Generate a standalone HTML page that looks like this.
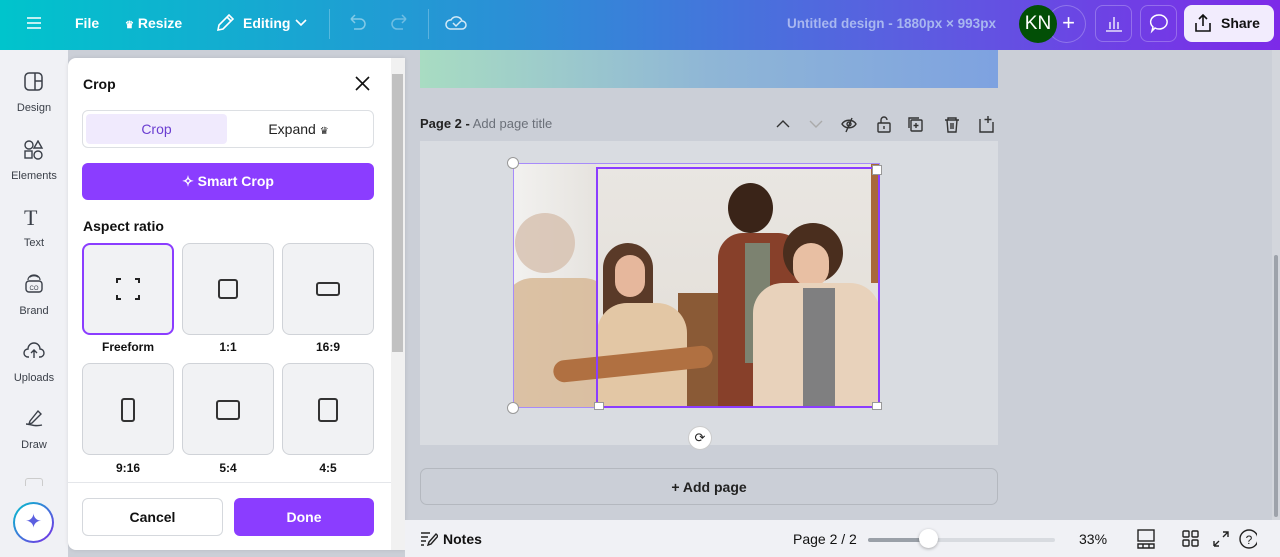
<!DOCTYPE html>
<html><head><meta charset="utf-8"><style>
*{box-sizing:border-box;margin:0;padding:0}
body{width:1280px;height:557px;overflow:hidden;font-family:"Liberation Sans",sans-serif;background:#cbcfd7;position:relative}
.abs{position:absolute}
.top{left:0;top:0;width:1280px;height:50px;background:linear-gradient(90deg,#00c4cc 0%,#2b8fd6 40%,#5a5fe0 70%,#7d2ae8 100%)}
.tw{color:#fff;font-weight:bold;font-size:14px}
.side{left:0;top:50px;width:68px;height:507px;background:#f0f1f5}
.si{width:68px;text-align:center;font-size:11px;color:#3a3f48}
.panel{left:68px;top:58px;width:337px;height:492px;background:#fff;border-radius:8px 0 0 8px;box-shadow:0 0 4px rgba(0,0,0,.1)}
.box{background:#f1f2f4;border:1px solid #d0d3d8;border-radius:8px;width:92px;height:92px}
.lbl{font-size:12px;font-weight:bold;color:#111;text-align:center;width:92px}
.bot{left:405px;top:520px;width:875px;height:37px;background:#f0f1f5}
</style></head><body>
<div class="abs top"></div>
<svg class="abs" style="left:27px;top:16px" width="14" height="14"><path d="M0 2h14M0 7h14M0 12h14" stroke="#fff" stroke-width="1.6"/></svg>
<div class="abs tw" style="left:75px;top:15px">File</div>
<div class="abs tw" style="left:125px;top:15px"><span style="font-size:10px">♛</span> Resize</div>
<svg class="abs" style="left:215px;top:13px" width="20" height="20"><path d="M3 17l1-5L14 2l4 4L8 16z M12 4l4 4" fill="none" stroke="#fff" stroke-width="1.6"/></svg>
<div class="abs tw" style="left:243px;top:15px">Editing</div>
<svg class="abs" style="left:295px;top:19px" width="12" height="8"><path d="M1 1l5 5 5-5" fill="none" stroke="#fff" stroke-width="1.6"/></svg>
<div class="abs" style="left:329px;top:9px;width:1px;height:30px;background:rgba(255,255,255,.25)"></div>
<svg class="abs" style="left:347px;top:14px" width="20" height="18"><path d="M4 5h9a5 5 0 010 10H7M4 5l4-4M4 5l4 4" fill="none" stroke="rgba(255,255,255,.45)" stroke-width="1.5"/></svg>
<svg class="abs" style="left:390px;top:14px" width="20" height="18"><path d="M16 5H7a5 5 0 000 10h6M16 5l-4-4M16 5l-4 4" fill="none" stroke="rgba(255,255,255,.35)" stroke-width="1.5"/></svg>
<div class="abs" style="left:428px;top:9px;width:1px;height:30px;background:rgba(255,255,255,.25)"></div>
<svg class="abs" style="left:444px;top:12px" width="24" height="20"><path d="M6 17h12a4 4 0 000-8 6 6 0 00-11-1 4.5 4.5 0 00-1 9z M9 11l3 3 5-5" fill="none" stroke="rgba(255,255,255,.8)" stroke-width="1.5"/></svg>
<div class="abs" style="left:787px;top:16px;font-size:13.5px;font-weight:bold;color:#a8b7f0">Untitled design - 1880px × 993px</div>
<div class="abs" style="left:1047px;top:5px;width:39px;height:38px;border-radius:50%;border:1px solid rgba(255,255,255,.25);color:#fff;font-size:22px;text-align:right;padding-right:10px;line-height:34px">+</div>
<div class="abs" style="left:1019px;top:5px;width:38px;height:38px;border-radius:50%;background:#024f06;color:#fff;font-size:19px;text-align:center;line-height:38px">KN</div>
<div class="abs" style="left:1095px;top:5px;width:37px;height:37px;border-radius:8px;border:1px solid rgba(255,255,255,.25)"></div>
<svg class="abs" style="left:1104px;top:13px" width="20" height="20"><path d="M2 18h16M6 16V9M10 16V4M14 16V9" stroke="#fff" stroke-width="1.3"/></svg>
<div class="abs" style="left:1140px;top:5px;width:37px;height:37px;border-radius:8px;border:1px solid rgba(255,255,255,.25)"></div>
<svg class="abs" style="left:1148px;top:13px" width="22" height="22"><path d="M11 2a8 7 0 11-4 13l-3 3 1-4A8 7 0 0111 2z" fill="none" stroke="#fff" stroke-width="1.5"/></svg>
<div class="abs" style="left:1184px;top:5px;width:90px;height:37px;border-radius:8px;background:#f2ecfd"></div>
<svg class="abs" style="left:1193px;top:13px" width="20" height="20"><path d="M10 2v11M6 6l4-4 4 4M3 10v8h14v-8" fill="none" stroke="#111" stroke-width="1.6"/></svg>
<div class="abs" style="left:1221px;top:15px;font-size:14px;font-weight:bold;color:#111">Share</div>

<div class="abs side"></div>
<svg class="abs" style="left:24px;top:72px" width="20" height="20"><rect x="1" y="1" width="17" height="17" rx="4" fill="none" stroke="#3a3f48" stroke-width="1.5"/><path d="M11 1v17M11 9h7" stroke="#3a3f48" stroke-width="1.5"/></svg>
<div class="abs si" style="top:102px">Design</div>
<svg class="abs" style="left:24px;top:140px" width="20" height="20"><circle cx="5" cy="5" r="4" fill="none" stroke="#3a3f48" stroke-width="1.4"/><path d="M14 1l4 7h-8z" fill="none" stroke="#3a3f48" stroke-width="1.4"/><rect x="1" y="11" width="7" height="7" fill="none" stroke="#3a3f48" stroke-width="1.4"/><circle cx="14" cy="15" r="4" fill="none" stroke="#3a3f48" stroke-width="1.4"/></svg>
<div class="abs si" style="top:170px">Elements</div>
<div class="abs" style="left:24px;top:205px;font-family:'Liberation Serif',serif;font-size:22px;color:#3a3f48">T</div>
<div class="abs si" style="top:237px">Text</div>
<svg class="abs" style="left:24px;top:274px" width="20" height="20"><rect x="2" y="7" width="16" height="11" rx="3" fill="none" stroke="#3a3f48" stroke-width="1.4"/><path d="M4 6a6 5 0 0112 0M6 3a5 3 0 018 0" fill="none" stroke="#3a3f48" stroke-width="1.2"/><text x="10" y="16" font-size="6" text-anchor="middle" fill="#3a3f48" font-family="Liberation Sans">CO</text></svg>
<div class="abs si" style="top:305px">Brand</div>
<svg class="abs" style="left:23px;top:342px" width="22" height="18"><path d="M6 15H5a4 4 0 010-8 6 6 0 0112 0 4 4 0 010 8h-1M11 16V9M8 11l3-3 3 3" fill="none" stroke="#3a3f48" stroke-width="1.4"/></svg>
<div class="abs si" style="top:372px">Uploads</div>
<svg class="abs" style="left:24px;top:408px" width="22" height="20"><path d="M6 13l8-10 3 3-9 9-3 1zM2 16c5 0 8 3 16 1" fill="none" stroke="#3a3f48" stroke-width="1.4"/></svg>
<div class="abs si" style="top:439px">Draw</div>
<div class="abs" style="left:25px;top:478px;width:18px;height:8px;border:1px solid #ccc;border-bottom:none;border-radius:3px 3px 0 0"></div>
<div class="abs" style="left:13px;top:502px;width:41px;height:41px;border-radius:50%;background:linear-gradient(135deg,#00c4cc,#7d2ae8);padding:2px"><div style="width:37px;height:37px;border-radius:50%;background:#fff;text-align:center;line-height:37px;color:#5b5fe0;font-size:20px">✦</div></div>

<div class="abs panel"></div>
<div class="abs" style="left:391px;top:58px;width:14px;height:492px;background:#f1f1f1"></div>
<div class="abs" style="left:392px;top:74px;width:11px;height:278px;background:#c1c1c1"></div>
<div class="abs" style="left:83px;top:76px;font-size:14px;font-weight:bold;color:#111">Crop</div>
<svg class="abs" style="left:355px;top:76px" width="15" height="15"><path d="M1 1l13 13M14 1L1 14" stroke="#111" stroke-width="1.6"/></svg>
<div class="abs" style="left:82px;top:110px;width:292px;height:38px;border:1px solid #dcdfe3;border-radius:6px"></div>
<div class="abs" style="left:86px;top:114px;width:141px;height:30px;background:#f0eafd;border-radius:4px;text-align:center;line-height:30px;color:#6b3ed1;font-size:14px">Crop</div>
<div class="abs" style="left:227px;top:114px;width:143px;height:30px;text-align:center;line-height:30px;color:#222;font-size:14px">Expand <span style="font-size:10px">♛</span></div>
<div class="abs" style="left:82px;top:163px;width:292px;height:37px;background:#8b3dff;border-radius:6px;color:#fff;font-weight:bold;font-size:14px;text-align:center;line-height:37px">✧ Smart Crop</div>
<div class="abs" style="left:83px;top:218px;font-size:14px;font-weight:bold;color:#111">Aspect ratio</div>
<div class="abs box" style="left:82px;top:243px;border:2px solid #8b3dff"></div>
<svg class="abs" style="left:116px;top:278px" width="24" height="22"><path d="M1 5V1h4M19 1h4v4M23 17v4h-4M5 21H1v-4" fill="none" stroke="#222" stroke-width="2"/></svg>
<div class="abs box" style="left:182px;top:243px"></div>
<div class="abs" style="left:218px;top:279px;width:20px;height:20px;border:2px solid #333;border-radius:3px"></div>
<div class="abs box" style="left:282px;top:243px"></div>
<div class="abs" style="left:316px;top:282px;width:24px;height:14px;border:2px solid #333;border-radius:3px"></div>
<div class="abs lbl" style="left:82px;top:340px">Freeform</div>
<div class="abs lbl" style="left:182px;top:340px">1:1</div>
<div class="abs lbl" style="left:282px;top:340px">16:9</div>
<div class="abs box" style="left:82px;top:363px"></div>
<div class="abs" style="left:121px;top:398px;width:14px;height:24px;border:2px solid #333;border-radius:3px"></div>
<div class="abs box" style="left:182px;top:363px"></div>
<div class="abs" style="left:216px;top:400px;width:24px;height:20px;border:2px solid #333;border-radius:3px"></div>
<div class="abs box" style="left:282px;top:363px"></div>
<div class="abs" style="left:318px;top:398px;width:20px;height:24px;border:2px solid #333;border-radius:3px"></div>
<div class="abs lbl" style="left:82px;top:461px">9:16</div>
<div class="abs lbl" style="left:182px;top:461px">5:4</div>
<div class="abs lbl" style="left:282px;top:461px">4:5</div>
<div class="abs" style="left:68px;top:482px;width:323px;height:1px;background:#e4e6ea"></div>
<div class="abs" style="left:82px;top:498px;width:141px;height:38px;border:1px solid #d5d8dd;border-radius:6px;text-align:center;line-height:36px;font-weight:bold;font-size:14px;color:#111">Cancel</div>
<div class="abs" style="left:234px;top:498px;width:140px;height:38px;background:#8b3dff;border-radius:6px;text-align:center;line-height:38px;font-weight:bold;font-size:14px;color:#fff">Done</div>

<div class="abs" style="left:420px;top:50px;width:578px;height:38px;background:linear-gradient(90deg,#a8dcc2,#8fb6d6 50%,#7ea2e0)"></div>
<div class="abs" style="left:420px;top:116px;font-size:13px;color:#222"><b>Page 2 -</b> <span style="color:#6b7079">Add page title</span></div>
<svg class="abs" style="left:770px;top:114px" width="230" height="20" fill="none" stroke="#333" stroke-width="1.4"><path d="M7 13l6-6 6 6"/><path d="M40 7l6 6 6-6" stroke="#aaa"/><path d="M72 10c3-5 11-5 14 0-3 5-11 5-14 0zM82 4l-6 14"/><circle cx="79" cy="10" r="2"/><rect x="108" y="9" width="12" height="9" rx="1"/><path d="M111 9V6a3 3 0 016 0M114 12v3"/><rect x="141" y="6" width="11" height="11" rx="1"/><path d="M139 14V4h10M146 9v5M143.5 11.5h5"/><path d="M175 6h14M178 6V4h8v2M177 6l1 12h8l1-12M181 9v6M183 9v6"/><path d="M210 5v13h13V8M218 2v7M214.5 5.5h7"/></svg>
<div class="abs" style="left:420px;top:141px;width:578px;height:304px;background:#d9dce1"></div>

<div class="abs" style="left:513px;top:163px;width:367px;height:245px;overflow:hidden;background:#ece9e6">
  <div class="abs" style="left:0;top:0;width:84px;height:245px;background:linear-gradient(90deg,#f2f1ef,#e6e3df);"></div>
  <div class="abs" style="left:2px;top:50px;width:60px;height:60px;border-radius:50%;background:#d6bfae;opacity:.8"></div>
  <div class="abs" style="left:-10px;top:115px;width:110px;height:140px;border-radius:30px 30px 0 0;background:#d7b896;opacity:.85"></div>
  <div class="abs" style="left:83px;top:0;width:284px;height:245px;background:linear-gradient(180deg,#e9e6e2,#e2ddd6)"></div>
  <div class="abs" style="left:358px;top:0;width:9px;height:120px;background:#a8683a"></div>
  <div class="abs" style="left:165px;top:130px;width:60px;height:115px;background:#8a5a36"></div>
  <div class="abs" style="left:90px;top:80px;width:50px;height:80px;border-radius:25px 25px 8px 8px;background:#5a3a28"></div>
  <div class="abs" style="left:102px;top:92px;width:30px;height:42px;border-radius:15px;background:#e6b79c"></div>
  <div class="abs" style="left:84px;top:140px;width:90px;height:105px;border-radius:30px 30px 0 0;background:#e3c7a5"></div>
  <div class="abs" style="left:215px;top:20px;width:45px;height:50px;border-radius:50%;background:#3a2418"></div>
  <div class="abs" style="left:205px;top:70px;width:85px;height:175px;border-radius:25px 25px 0 0;background:#87402a"></div>
  <div class="abs" style="left:232px;top:80px;width:25px;height:120px;background:#7c8270"></div>
  <div class="abs" style="left:270px;top:60px;width:60px;height:60px;border-radius:50%;background:#4a2e1e"></div>
  <div class="abs" style="left:280px;top:80px;width:36px;height:44px;border-radius:18px;background:#e8bfa3"></div>
  <div class="abs" style="left:240px;top:120px;width:127px;height:125px;border-radius:30px 30px 0 0;background:#e8d2bb"></div>
  <div class="abs" style="left:290px;top:125px;width:32px;height:120px;background:#7f7f80"></div>
  <div class="abs" style="left:40px;top:190px;width:160px;height:22px;border-radius:11px;background:#b07041;transform:rotate(-6deg)"></div>
</div>
<div class="abs" style="left:513px;top:163px;width:367px;height:245px;border:1px solid #a78bfa"></div>
<div class="abs" style="left:596px;top:167px;width:284px;height:241px;border:2px solid #8b3dff"></div>
<div class="abs" style="left:507px;top:157px;width:12px;height:12px;border-radius:50%;background:#fff;border:1px solid #999"></div>
<div class="abs" style="left:507px;top:402px;width:12px;height:12px;border-radius:50%;background:#fff;border:1px solid #999"></div>
<div class="abs" style="left:594px;top:402px;width:10px;height:8px;background:#fff;border:1px solid #999"></div>
<div class="abs" style="left:872px;top:402px;width:10px;height:8px;background:#fff;border:1px solid #999"></div>
<div class="abs" style="left:872px;top:165px;width:10px;height:10px;background:#fff;border:1px solid #999"></div>
<div class="abs" style="left:688px;top:426px;width:24px;height:24px;border-radius:50%;background:#fff;border:1px solid #ccc;text-align:center;line-height:22px;font-size:13px;color:#222">⟳</div>

<div class="abs" style="left:420px;top:468px;width:578px;height:37px;border:1px solid #b4b8bf;border-radius:7px;background:#cbcfd7;text-align:center;line-height:36px;font-size:14px;font-weight:bold;color:#222">+ Add page</div>
<div class="abs" style="left:1272px;top:50px;width:8px;height:470px;background:#d3d6dc"></div>
<div class="abs" style="left:1274px;top:255px;width:4px;height:262px;background:#9da2aa;border-radius:2px"></div>

<div class="abs bot"></div>
<svg class="abs" style="left:420px;top:531px" width="18" height="16"><path d="M1 2h9M1 6h7M1 10h5M1 14h3M8 14l1-3 7-8 2 2-7 8z" fill="none" stroke="#222" stroke-width="1.4"/></svg>
<div class="abs" style="left:443px;top:531px;font-size:14px;font-weight:bold;color:#111">Notes</div>
<div class="abs" style="left:793px;top:531px;font-size:14px;color:#111">Page 2 / 2</div>
<div class="abs" style="left:868px;top:538px;width:187px;height:4px;border-radius:2px;background:#d8dbe0"></div>
<div class="abs" style="left:868px;top:538px;width:60px;height:4px;border-radius:2px;background:#9aa0a8"></div>
<div class="abs" style="left:919px;top:529px;width:19px;height:19px;border-radius:50%;background:#fff;box-shadow:0 1px 3px rgba(0,0,0,.3)"></div>
<div class="abs" style="left:1079px;top:531px;font-size:14px;color:#111">33%</div>
<svg class="abs" style="left:1137px;top:529px" width="120" height="20" fill="none" stroke="#222" stroke-width="1.4"><rect x="1" y="1" width="16" height="11"/><path d="M1 15h16v4H1zM6 15v4M12 15v4"/><rect x="46" y="2" width="6" height="6" rx="1"/><rect x="55" y="2" width="6" height="6" rx="1"/><rect x="46" y="11" width="6" height="6" rx="1"/><rect x="55" y="11" width="6" height="6" rx="1"/><path d="M86 3h5v5M91 3l-5 5M77 17v-5M77 17h5M77 17l5-5"/><circle cx="112" cy="10" r="9"/><text x="112" y="15" font-size="12" text-anchor="middle" fill="#222" stroke="none" font-family="Liberation Sans">?</text></svg>
</body></html>
